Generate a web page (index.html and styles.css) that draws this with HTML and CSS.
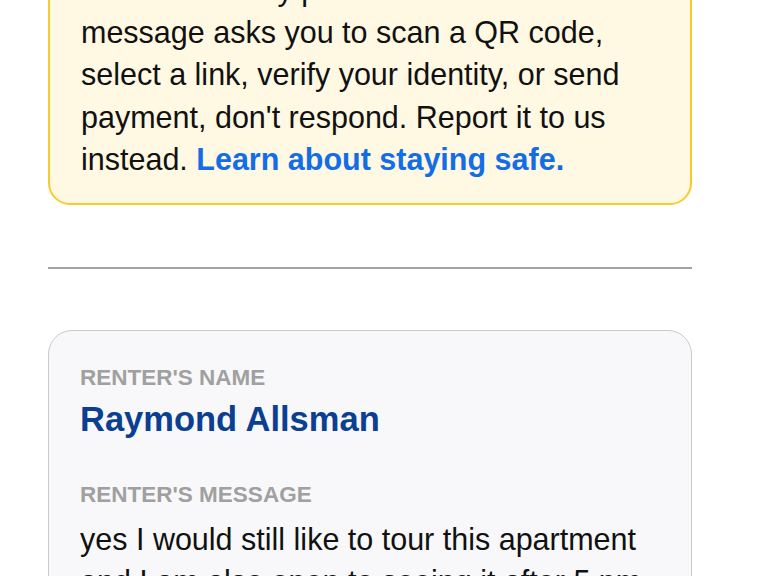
FILE: index.html
```html
<!DOCTYPE html>
<html>
<head>
    <title>New message from a renter</title>
    <link rel="stylesheet" href="styles.css">
</head>
<body>
<div class="page">
    <div class="alert-box">
        Scammers may pose as renters. If a message asks you to scan a QR code, select a link, verify your identity, or send payment, don't respond. Report it to us instead. <a href="#" class="safe-link">Learn about staying safe.</a>
    </div>

    <hr class="divider">

    <div class="renter-card">
        <div class="field-label">RENTER'S NAME</div>
        <div class="renter-name">Raymond Allsman</div>

        <div class="field-label message-label">RENTER'S MESSAGE</div>
        <div class="renter-message">yes I would still like to tour this apartment and I am also open to seeing it after 5 pm</div>
    </div>
</div>
</body>
</html>
```

FILE: styles.css
```css
body {
    margin: 0;
    background-color: #ffffff;
    color: #111111;
    font-family: "Liberation Sans", Arial, Helvetica, sans-serif;
}

.page {
    width: 644px;
    margin-left: 48px;
}

.alert-box {
    margin-top: -56px;
    background-color: #fff8e3;
    border: 2px solid #f7cb2d;
    border-radius: 22px;
    padding: 22px 31px 22px 31px;
    font-size: 30.5px;
    line-height: 42.5px;
}

.safe-link {
    color: #126de6;
    font-weight: bold;
    text-decoration: none;
}

.divider {
    border: none;
    height: 2px;
    background-color: #a3a3a3;
    margin: 62px 0 61px 0;
}

.renter-card {
    background-color: #f8f8fa;
    border: 1.5px solid #cacaca;
    border-radius: 24px;
    padding: 34px 31px 40px 31px;
}

.field-label {
    font-size: 22.5px;
    font-weight: bold;
    color: #a0a0a0;
    line-height: 26px;
}

.renter-name {
    margin-top: 8px;
    font-size: 34.5px;
    font-weight: bold;
    color: #0b3f91;
    line-height: 40px;
}

.message-label {
    margin-top: 43px;
}

.renter-message {
    margin-top: 10px;
    font-size: 30.5px;
    line-height: 42.5px;
}
```
